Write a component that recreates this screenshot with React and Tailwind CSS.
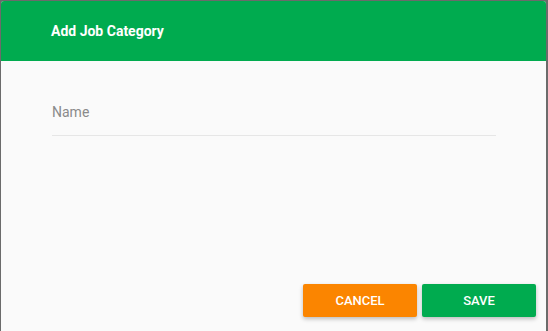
import React from "react";

const App = () => {
  return (
    <div className="w-[548px] h-[331px] bg-[#6b6b6b] pt-px pl-px pr-[2px] overflow-hidden" style={{ fontFamily: "Roboto, 'Liberation Sans', sans-serif" }}>
      <div className="flex flex-col h-full bg-[#fafafa] rounded-t-[3px] overflow-hidden">
        <div className="h-[60px] bg-[#00ab4f] flex items-center pl-[50px]">
          <h2 className="text-[14px] font-bold text-white">Add Job Category</h2>
        </div>
        <div className="pl-[51px]">
          <div className="mt-[39px] w-[444px] border-b border-[#e6e6e6] pb-[11px]">
            <input
              type="text"
              placeholder="Name"
              className="w-full h-[24px] bg-transparent text-[14px] text-[#333] placeholder:text-[#8a8a8a] outline-none"
            />
          </div>
        </div>
        <div className="mt-auto flex justify-end gap-[5px] pr-[10px] pb-[14px]">
          <button className="w-[114px] h-[33px] rounded-[2px] bg-[#fb8500] text-white text-[13px] font-medium uppercase shadow-[0_2px_4px_rgba(0,0,0,0.25)]">
            Cancel
          </button>
          <button className="w-[114px] h-[33px] rounded-[2px] bg-[#00ab4f] text-white text-[13px] font-medium uppercase shadow-[0_2px_4px_rgba(0,0,0,0.25)]">
            Save
          </button>
        </div>
      </div>
    </div>
  );
};

export default App;
